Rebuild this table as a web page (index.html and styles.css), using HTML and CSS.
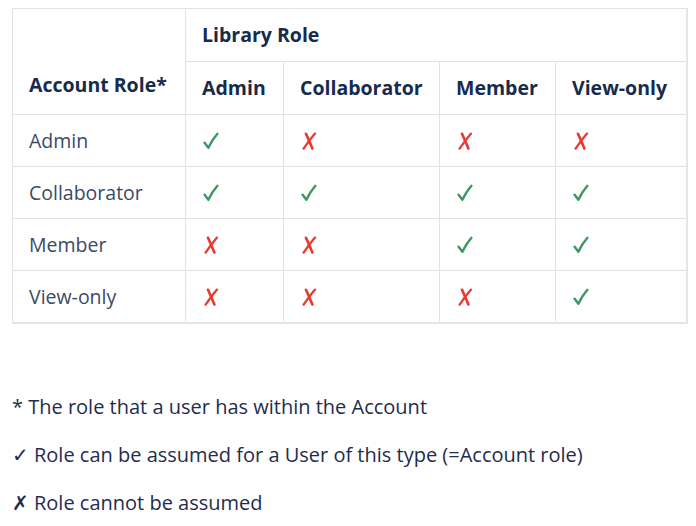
FILE: index.html
```html
<!DOCTYPE html>
<html lang="en">
<head>
<meta charset="utf-8">
<title>Roles</title>
<link rel="stylesheet" href="styles.css">
</head>
<body>
<div class="page">
  <svg width="0" height="0" class="defs" aria-hidden="true">
    <defs>
      <symbol id="yes" viewBox="0 0 16 18">
        <path d="M1.6 10.8 L5.4 15.8 Q9 8 14.4 1.8" fill="none" stroke="currentColor" stroke-width="2.4" stroke-linecap="round" stroke-linejoin="round"/>
      </symbol>
      <symbol id="no" viewBox="0 0 16 18">
        <path d="M14 1.6 Q8.6 8 2.6 16.6" fill="none" stroke="currentColor" stroke-width="2.3" stroke-linecap="round"/>
        <path d="M5 1.8 Q8.2 8.8 11.4 16.4" fill="none" stroke="currentColor" stroke-width="2.7" stroke-linecap="round"/>
      </symbol>
    </defs>
  </svg>
  <table class="roles">
    <colgroup>
      <col class="c1"><col class="c2"><col class="c3"><col class="c4"><col class="c5">
    </colgroup>
    <thead>
      <tr class="h1">
        <th rowspan="2" class="acct">Account Role*</th>
        <th colspan="4">Library Role</th>
      </tr>
      <tr class="h2">
        <th>Admin</th><th>Collaborator</th><th>Member</th><th>View-only</th>
      </tr>
    </thead>
    <tbody>
      <tr><td>Admin</td><td class="y"><svg class="ic"><use href="#yes"/></svg></td><td class="n"><svg class="ic"><use href="#no"/></svg></td><td class="n"><svg class="ic"><use href="#no"/></svg></td><td class="n"><svg class="ic"><use href="#no"/></svg></td></tr>
      <tr><td>Collaborator</td><td class="y"><svg class="ic"><use href="#yes"/></svg></td><td class="y"><svg class="ic"><use href="#yes"/></svg></td><td class="y"><svg class="ic"><use href="#yes"/></svg></td><td class="y"><svg class="ic"><use href="#yes"/></svg></td></tr>
      <tr><td>Member</td><td class="n"><svg class="ic"><use href="#no"/></svg></td><td class="n"><svg class="ic"><use href="#no"/></svg></td><td class="y"><svg class="ic"><use href="#yes"/></svg></td><td class="y"><svg class="ic"><use href="#yes"/></svg></td></tr>
      <tr><td>View-only</td><td class="n"><svg class="ic"><use href="#no"/></svg></td><td class="n"><svg class="ic"><use href="#no"/></svg></td><td class="n"><svg class="ic"><use href="#no"/></svg></td><td class="y"><svg class="ic"><use href="#yes"/></svg></td></tr>
    </tbody>
  </table>
  <div class="notes">
    <p>* The role that a user has within the Account</p>
    <p><span class="mark">✓</span> Role can be assumed for a User of this type (=Account role)</p>
    <p><span class="mark">✗</span> Role cannot be assumed</p>
  </div>
</div>
</body>
</html>
```

FILE: styles.css
```css
html, body {
  margin: 0;
  padding: 0;
  background: #ffffff;
}
body {
  font-family: "Open Sans", "Noto Sans", sans-serif;
  font-size: 19.5px;
  color: #172b4d;
}
.page {
  padding: 8px 0 0 12px;
}
.defs {
  position: absolute;
}
.roles {
  border-collapse: collapse;
  table-layout: fixed;
  width: 674px;
  border-right: 2px solid #e4e5e8;
  border-bottom: 2px solid #e4e5e8;
}
.c1 { width: 173px; }
.c2 { width: 98px; }
.c3 { width: 156px; }
.c4 { width: 116px; }
.c5 { width: 131px; }
.roles th, .roles td {
  border: 1px solid #e1e2e5;
  text-align: left;
  padding: 0 0 0 16px;
  vertical-align: middle;
  line-height: 26px;
}
.roles th {
  font-weight: 700;
  color: #172b4d;
  height: 52px;
}
.roles th.acct {
  vertical-align: bottom;
  padding-bottom: 16px;
}
.roles td {
  height: 51px;
  color: #3b4a66;
}
.roles td.y, .roles td.n {
  padding-left: 17px;
}
.roles td.y { color: #3e9662; }
.roles td.n { color: #ea3a30; }
.ic {
  display: block;
  width: 16px;
  height: 18px;
}
.notes {
  padding-top: 69px;
}
.notes p {
  margin: 0 0 20px 0;
  line-height: 28px;
  font-size: 20px;
  color: #1f2d4d;
}
.mark {
  font-family: "DejaVu Sans", sans-serif;
  font-size: 20px;
}
```
